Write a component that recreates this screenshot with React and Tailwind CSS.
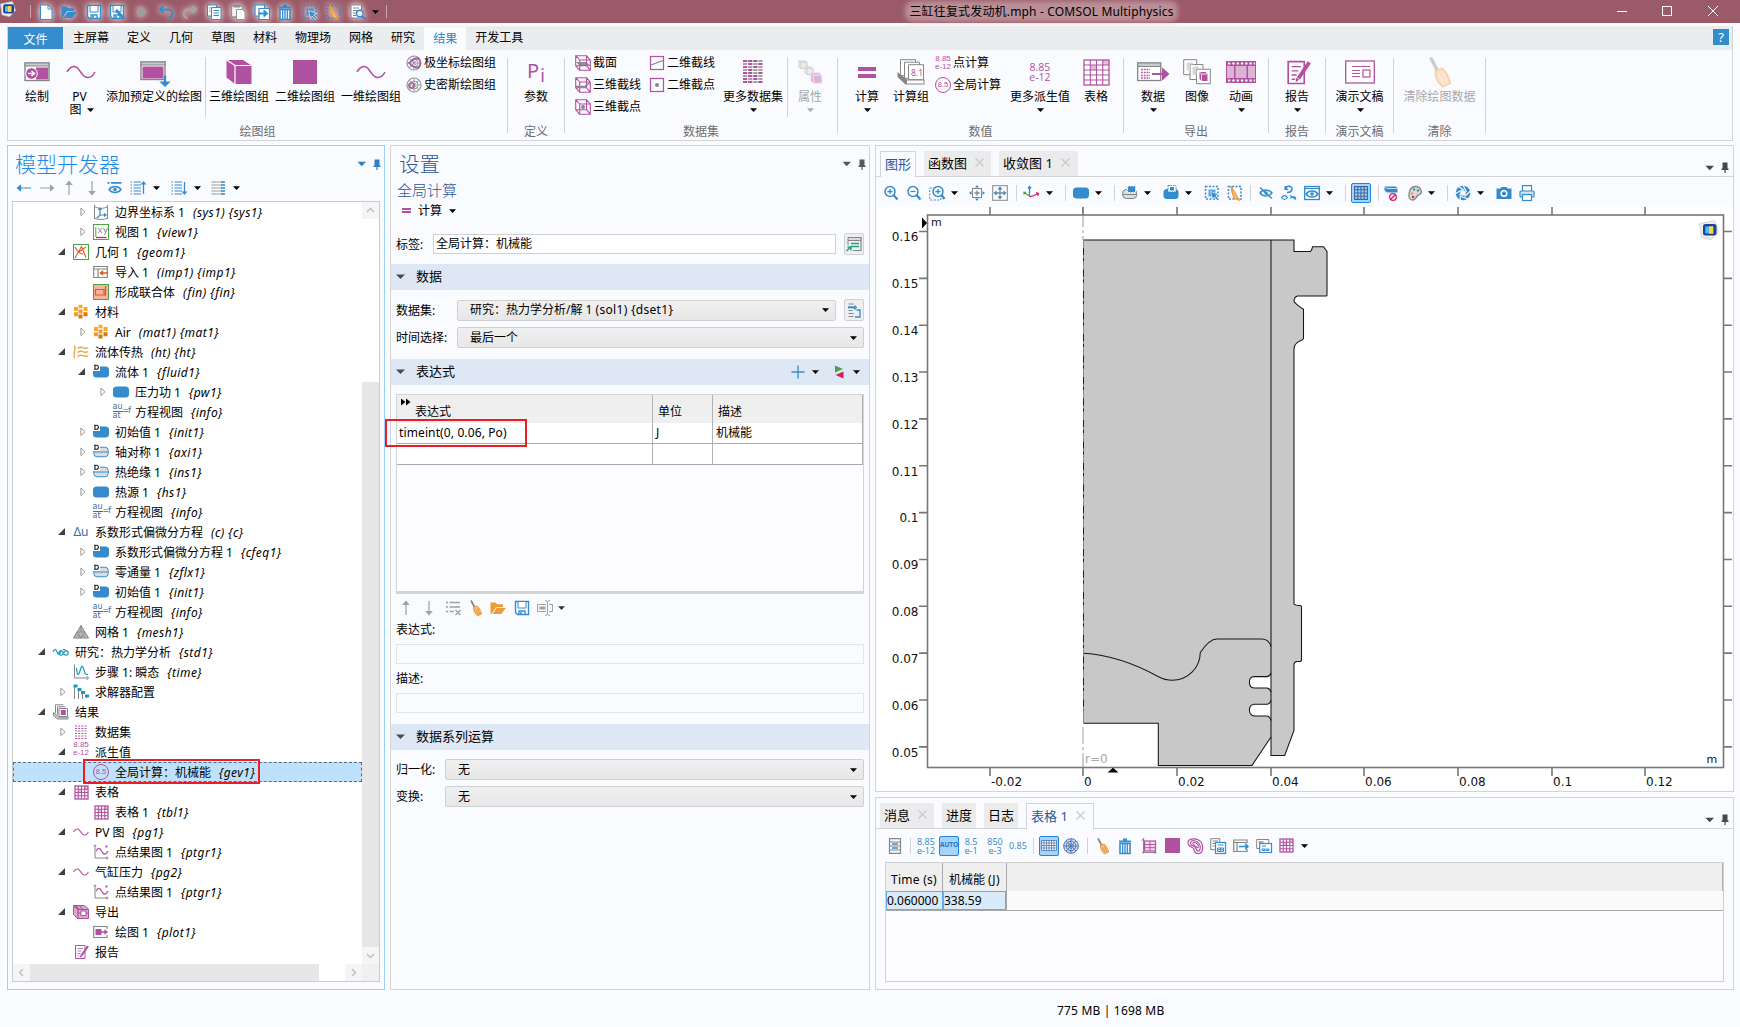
import React from "react";

const P = "#b152a0";
const B = "#348ccc";
const G = "#858688";
const O = "#f0993a";

/* ---------- drawing helpers ---------- */

function Svg({ w = 16, h = 16, vb, className = "", children }) {
  return (
    <svg
      width={w}
      height={h}
      viewBox={vb || `0 0 ${w} ${h}`}
      fill="none"
      className={`block shrink-0 overflow-visible ${className}`}
    >
      {children}
    </svg>
  );
}

function Caret({ className = "", color = "#000" }) {
  return (
    <Svg w={8} h={8} className={className}>
      <path d="M1 2.200h7L4.500 6z" fill={color} />
    </Svg>
  );
}

function Pin({ color }) {
  return (
    <Svg w={8} h={11}>
      <path d="M1.500 0.500h5v6h1v1.400H4.600V11H3.400V7.900H0.500V6.500h1z" fill={color} />
    </Svg>
  );
}

function Wave({ w = 30, h = 14, sw = 1.5 }) {
  return (
    <Svg w={w} h={h} vb="0 0 30 14">
      <path d="M1 7C4 1 9 0 12 3.500C15 7 17 12 21 12.500C25 13 27.500 10 29 7" stroke={P} strokeWidth={sw} />
    </Svg>
  );
}

function Broom({ w = 16, h = 16, faded, className }) {
  return (
    <Svg w={w} h={h} vb="0 0 16 16" className={className}>
      <g opacity={faded ? 0.4 : 1}>
        <path d="M3 0.300L7 8" stroke="#84868a" strokeWidth="1.800" />
        <path d="M5.500 7.500L9 6C12 8.500 13 12 13.500 14L9.500 15.800C7 14 5.500 11 5.500 7.500Z" fill="#f8bd70" stroke={O} />
        <path d="M7.500 9.500l3 5.500M9.500 8.500l2.500 5.500" stroke={faded ? "#fbd9a8" : "#d9822a"} strokeWidth="0.700" />
      </g>
    </Svg>
  );
}

function Trash({ className }) {
  return (
    <Svg className={className}>
      <path d="M6 0.500h4v2h4v2H2v-2h4z" fill={B} />
      <path d="M3 5.500h10v10H3z" fill="#fff" stroke={B} strokeWidth="1.600" />
      <path d="M5.700 6v9M8 6v9M10.300 6v9" stroke={B} strokeWidth="1.300" />
    </Svg>
  );
}

function Floppy({ className, pen }) {
  return (
    <Svg className={className}>
      <path d="M1.500 1.500h13v13H3.500l-2-2z" fill="#fff" stroke={B} strokeWidth="1.400" />
      <path d="M4 1.500h8v6.500H4z" fill="#fff" stroke={B} />
      <path d="M5 14.500v-3.500h6v3.500" stroke={B} strokeWidth="1.300" />
      <path d="M6.200 12h1.600v2H6.200z" fill={B} />
      {pen && <path d="M7 6l8 8.500" stroke={B} strokeWidth="2.600" />}
    </Svg>
  );
}

function Folder({ className, color = B }) {
  return (
    <Svg className={className}>
      <path d="M0.500 2.500h5l1.500 1.700h6v3H6L1.500 13.800H0.500z" fill={color} />
      <path d="M6.500 8h9.300l-4.600 6H2.500z" fill={color} />
    </Svg>
  );
}

function Grid({ w = 16, h = 16, cols = 4, rows = 4, fill = "#fff" }) {
  const v = Array.from({ length: cols - 1 }, (_, i) => 1 + ((w - 2) / cols) * (i + 1));
  const r = Array.from({ length: rows - 1 }, (_, i) => 1 + ((h - 2) / rows) * (i + 1));
  return (
    <Svg w={w} h={h}>
      <rect x="1" y="1" width={w - 2} height={h - 2} fill={fill} />
      <path d={`M${v[cols - 2]} 1H${w - 1}V${r[0]}H${v[cols - 2]}zM${v[0]} ${r[0]}H${v[1]}V${r[1]}H${v[0]}z`} fill="#e3bcdc" />
      <path d={v.map((x) => `M${x} 1V${h - 1}`).join("") + r.map((y) => `M1 ${y}H${w - 1}`).join("")} stroke={P} strokeWidth="1.100" />
      <rect x="1" y="1" width={w - 2} height={h - 2} stroke={P} strokeWidth="1.300" />
    </Svg>
  );
}

function Blob({ d, soft }) {
  return (
    <Svg>
      <rect x={soft ? 0.7 : 0} y={soft ? 3.2 : 2.5} width={soft ? 14.6 : 16} height={soft ? 9.6 : 11} rx="3.500" fill={soft ? "#dcdddf" : B} stroke={soft ? B : "none"} />
      {soft && <path d="M1 8h14" stroke={B} />}
      {d && (
        <g>
          <rect x="0" y="0" width="7" height="7" fill="#fff" />
          <path d="M1 1.200h2.500c2.500 0 2.500 4 0 4H1M2 1v4.500" stroke="#222" strokeWidth="1.100" />
        </g>
      )}
    </Svg>
  );
}

function Cube3({ kind }) {
  return (
    <Svg>
      {kind === "plane" && <path d="M1 7h10l5 4H5z" fill="#909294" />}
      <path d="M0.700 0.700h10.800v10H0.700zM4.700 5h10.600v10.300H4.700zM0.700 0.700L4.700 5M11.500 0.700L15.300 5M0.700 10.700l4 4.600M11.500 10.700l3.800 4.600" stroke={P} strokeWidth="1.100" />
      {kind === "line" && <path d="M1 9.500h9l5-4" stroke={G} strokeWidth="1.400" />}
      {kind === "point" && <circle cx="8" cy="8" r="2" fill={G} />}
    </Svg>
  );
}

function MiniNum({ top, bottom, color, className = "" }) {
  return (
    <div className={`flex flex-col items-center ${color} ${className}`}>
      <span>{top}</span>
      {bottom && <span>{bottom}</span>}
    </div>
  );
}

const MINI_PURPLE = "text-[8px] leading-[8px] text-[#b152a0] [font-family:'Liberation_Sans',sans-serif]";
const MINI_BLUE = "text-[9px] leading-[9px] text-[#2f86c6] [font-family:'Open_Sans',sans-serif]";

function CircleNum() {
  return (
    <div className="flex size-4 shrink-0 items-center justify-center rounded-full border border-[#b152a0] text-[7.500px] leading-none text-[#b152a0] [font-family:'Liberation_Sans',sans-serif]">
      8.5
    </div>
  );
}

function Logo({ className, size = 16 }) {
  return (
    <Svg w={size} h={size} vb="0 0 16 16" className={className}>
      <path d="M0.500 3l12-2.500 3 9-6 6.300-7.500-2z" fill="#eceded" stroke="#c8c9ce" strokeWidth="0.600" />
      <rect x="3.200" y="3.200" width="10.800" height="9.200" rx="2" fill="#17439c" />
      <path d="M5 5.200h4v5.500H5z" fill="#59b9e8" />
      <path d="M8 5h3.500v6H8z" fill="#f3d84b" />
    </Svg>
  );
}

function SelectBox({ className, broom }) {
  return (
    <Svg className={className}>
      <rect x="1.500" y="1.500" width="12.500" height="12.500" stroke={B} strokeWidth="1.500" strokeDasharray="2 1.500" />
      <rect x="4.500" y="4.500" width="7" height="7" fill={B} opacity={broom ? 0 : 0.8} />
      {broom ? (
        <path d="M4 1l4 7 4 7-5-2-2-6z" fill="#f8bd70" stroke={O} strokeWidth="1.300" />
      ) : (
        <path d="M6.500 6.500l8.500 3-3.200 1.200 3 3.500-1.500 1.300-3-3.500-1.600 2.800z" fill={B} stroke="#fff" strokeWidth="0.600" />
      )}
    </Svg>
  );
}

function Eye({ y = 8, color = B }) {
  return (
    <g transform={`translate(0 ${y - 8})`}>
      <path d="M2 8c3-4 9-4 12 0c-3 4-9 4-12 0z" stroke={color} strokeWidth="1.400" />
      <circle cx="8" cy="8" r="1.800" fill={color} />
    </g>
  );
}

function Arrow({ dir, color }) {
  const paths = {
    left: "M1.500 8H15M4.500 5.500L1.500 8l3 2.500z",
    right: "M1 8h13.500M11.500 5.500l3 2.500-3 2.500z",
    up: "M8 1.500V15M5.500 4.500L8 1.500l2.500 3z",
    down: "M8 1v13.500M5.500 11.500L8 14.500l2.500-3z",
  };
  return (
    <Svg>
      <path d={paths[dir]} stroke={color} fill={color} strokeWidth="1.200" />
    </Svg>
  );
}

function Sep({ className = "h-4" }) {
  return <div className={`w-px shrink-0 bg-[#d3d3d5] ${className}`} />;
}

function At({ className = "", children }) {
  return <div className={`flex shrink-0 items-center justify-center ${className}`}>{children}</div>;
}

/* ---------- title bar ---------- */

function TitleBar() {
  const glow = "drop-shadow-[0_0_3px_rgba(255,255,255,1)]";
  return (
    <header className="flex h-[23px] shrink-0 items-center bg-[#9b5a67]">
      <Logo className="-mt-[6px]" />
      <div className="ml-[14px] h-[13px] w-px bg-[#c9a5ac]" />
      <Svg className={`ml-[7px] ${glow}`}>
        <path d="M2.500 1h7.500l4 4v10.500H2.500z" fill="#fff" stroke={B} />
        <path d="M10 1v4h4" stroke={B} />
      </Svg>
      <Folder className={`ml-[7px] ${glow}`} />
      <Floppy className={`ml-[9px] ${glow}`} />
      <Floppy pen className={`ml-[7px] ${glow}`} />
      <Svg className={`ml-[9px] ${glow}`}>
        <path d="M4 2.500l9 5.500-9 5.500z" fill="#9b9d9f" />
      </Svg>
      <Svg className={`ml-2 ${glow}`}>
        <path d="M5.500 2L2 5.500 5.500 9M2.500 5.500h7.500c5.500 0 5.500 8 0.500 8.500" stroke={B} strokeWidth="1.900" />
      </Svg>
      <Svg className={`ml-2 ${glow}`}>
        <path d="M10.500 2L14 5.500 10.500 9M13.500 5.500H6c-5.500 0-5.500 8-0.500 8.500" stroke="#a3a5a8" strokeWidth="1.900" />
      </Svg>
      <Svg className={`ml-2 ${glow}`}>
        <path d="M1.500 1h9v11h-9z" fill="#fff" stroke={B} />
        <path d="M5.500 3.500h9.500V15.500H5.500z" fill="#fff" stroke={B} />
        <path d="M7.500 6.500h5.500M7.500 9h5.500M7.500 11.500h5.500M3 4h1.500M3 7h1.500" stroke={B} strokeWidth="1.200" />
      </Svg>
      <Svg className={`ml-2 ${glow}`}>
        <path d="M1.500 2h11v11h-11z" fill="#f3f3f3" stroke="#8f9193" strokeWidth="1.300" />
        <path d="M4 0.500h6v3H4z" fill="#8f9193" />
        <path d="M6.500 5.500h6l2.500 2.500v7.500H6.500z" fill="#fff" stroke="#8f9193" />
      </Svg>
      <Svg className={`ml-2 ${glow}`}>
        <path d="M1 0.800h9.500V12H1z" fill="#fff" stroke={B} strokeWidth="1.200" />
        <path d="M5 4.500h10.500v11H5z" fill="#fff" stroke={B} strokeWidth="1.200" />
        <path d="M4.500 9.500h8M9.500 6.500l3.500 3-3.500 3" stroke={B} strokeWidth="1.900" />
      </Svg>
      <Trash className={`ml-[7px] ${glow}`} />
      <SelectBox className={`ml-[9px] ${glow}`} />
      <SelectBox broom className={`ml-2 ${glow}`} />
      <Svg className={`ml-2 ${glow}`}>
        <path d="M1 1h10.500v13H1z" fill="#fff" stroke={G} />
        <path d="M3 4h6M3 6.500h4M3 9h3M3 11.500h3" stroke={G} />
        <circle cx="9.800" cy="9.500" r="3.300" fill="#e6f2fb" stroke={B} strokeWidth="1.400" />
        <path d="M12 12l3.500 3.500" stroke={B} strokeWidth="2.200" />
      </Svg>
      <Caret className="ml-[5px]" />
      <div className="ml-[7px] h-[13px] w-px bg-[#c9a5ac]" />
      <div className="ml-[522px] flex w-[265px] justify-center">
        <span className="rounded bg-[#c39ca4]/80 leading-[13px] tracking-[0.170px] whitespace-nowrap text-black shadow-[0_0_5px_4px_rgba(195,156,164,0.8)]">
          三缸往复式发动机.mph - COMSOL Multiphysics
        </span>
      </div>
      <Svg w={10} h={10} className="mt-[-2px] ml-[443px]">
        <path d="M0 5.500h10" stroke="#fff" />
      </Svg>
      <Svg w={10} h={10} className="mt-[-2px] ml-[35px]">
        <rect x="0.500" y="0.500" width="9" height="9" stroke="#fff" />
      </Svg>
      <Svg w={10} h={10} className="mt-[-2px] ml-[36px]">
        <path d="M0 0l10 10M10 0L0 10" stroke="#fff" />
      </Svg>
    </header>
  );
}

/* ---------- ribbon ---------- */

function Big({ icon, label, caret, className = "", muted }) {
  return (
    <div className={`flex shrink-0 flex-col items-center ${className}`}>
      <div className="mt-[6px] flex h-8 items-center justify-center">{icon}</div>
      <div className={`mt-[2px] leading-[14px] whitespace-nowrap ${muted ? "text-[#a9a9ab]" : "text-black"}`}>{label}</div>
      {caret && <Caret className="mt-[2px]" color={muted ? "#a9a9ab" : "#000"} />}
    </div>
  );
}

function Small({ icon, label }) {
  return (
    <div className="flex h-[22px] items-center gap-[2px] whitespace-nowrap">
      <div className="flex w-4 shrink-0 justify-center">{icon}</div>
      <span>{label}</span>
    </div>
  );
}

function Group({ className, label, children }) {
  return (
    <section className={`flex shrink-0 ${className}`}>
      <div className="flex min-w-0 flex-1 flex-col">
        <div className="flex h-[74px]">{children}</div>
        <div className="text-center leading-[16px] text-[#6d6e70]">{label}</div>
      </div>
      <div className="mt-2 h-[75px] w-px shrink-0 bg-[#d3d3d5]" />
    </section>
  );
}

function PolarIcon({ smith }) {
  return (
    <Svg>
      <circle cx="8" cy="8" r="7" stroke="#98999b" strokeWidth="1.200" />
      <circle cx="8" cy="8" r="4" stroke="#98999b" />
      <path d="M1 8h14M8 1v14M3 3l10 10M13 3L3 13" stroke="#98999b" strokeWidth="0.900" />
      {smith ? (
        <circle cx="5.500" cy="8.500" r="2.600" stroke={P} strokeWidth="1.400" />
      ) : (
        <path d="M3 8c2-2 5-5 9-5c3 3 3 7 0 10c-3 0-6-2-9-5z" stroke={P} strokeWidth="1.500" />
      )}
    </Svg>
  );
}

const DATASET_ROWS = ["pppg", "gpgp", "pgpg", "gpgg", "ppgp", "gppg", "pgpg", "ppgp"];

function DatasetIcon() {
  return (
    <Svg w={20} h={24}>
      {DATASET_ROWS.map((row, r) =>
        row.split("").map((c, i) => (
          <rect key={`${r}-${i}`} x={i * 5.1} y={r * 3} width="4.200" height="2" fill={c === "p" ? P : "#a5a2a6"} />
        ))
      )}
    </Svg>
  );
}

const TABS = ["主屏幕", "定义", "几何", "草图", "材料", "物理场", "网格", "研究", "结果", "开发工具"];

function Ribbon() {
  return (
    <div className="mx-[7px] mt-[3px] h-[115px] shrink-0 border-r border-b border-l border-[#d3d4d8]">
      <nav className="flex h-6 items-stretch bg-[#ebecee]">
        <div className="mt-px flex h-[22px] w-[55px] items-center justify-center bg-[#348ccc] pt-[4px] text-white">文件</div>
        <div className="ml-px flex">
          {TABS.map((t) => (
            <div
              key={t}
              className={`flex items-center px-[9px] ${t === "结果" ? "mt-px bg-[#fafbff] text-[#2b86cc]" : "text-black"}`}
            >
              {t}
            </div>
          ))}
        </div>
        <div className="mt-[3px] mr-[3px] ml-auto flex size-4 items-center justify-center bg-[#348ccc] text-[13px] leading-none text-white">
          ?
        </div>
      </nav>
      <div className="flex h-[90px]">
        <Group className="w-[500px]" label="绘图组">
          <Big
            className="w-[58px]"
            label="绘制"
            icon={
              <Svg w={26} h={20}>
                <rect x="1" y="1" width="24" height="17.500" fill="#fff" stroke={G} strokeWidth="1.400" />
                <rect x="1" y="1" width="24" height="3" fill="#c9cacc" stroke={G} />
                <rect x="12" y="5.500" width="12" height="12" fill={P} />
                <circle cx="7.500" cy="11.500" r="5.800" fill={P} stroke="#fff" />
                <path d="M4 11.500h6M7.500 9l3 2.500-3 2.500" stroke="#fff" strokeWidth="1.500" />
              </Svg>
            }
          />
          <div className="flex w-[30px] shrink-0 flex-col items-center">
            <div className="mt-[6px] flex h-8 items-center">
              <Wave />
            </div>
            <div className="mt-[2px] mr-[3px] leading-[14px]">PV</div>
            <div className="ml-px flex items-center gap-1 leading-[12px]">
              图<Caret />
            </div>
          </div>
          <Big
            className="ml-[7px] w-[102px]"
            label="添加预定义的绘图"
            icon={
              <Svg w={30} h={26} className="mt-[4px]">
                <rect x="2" y="1" width="24" height="17.500" fill="#fff" stroke={G} strokeWidth="1.400" />
                <rect x="2" y="1" width="24" height="3" fill="#c9cacc" stroke={G} />
                <rect x="3.500" y="5.500" width="21" height="12" fill={P} />
                <path d="M26 14.500v9M23 21.500h6L26 24.500z" stroke={B} fill={B} strokeWidth="2.200" />
              </Svg>
            }
          />
          <Sep className="mt-[7px] h-[60px]" />
          <Big
            className="w-[66px]"
            label="三维绘图组"
            icon={
              <Svg w={26} h={26}>
                <path d="M0.500 1h16.500l8.500 5.500v18.500H9L0.500 18.500z" fill={P} />
                <path d="M0.500 1L9 6.500h16.500M9 6.500V25" stroke="#fff" strokeWidth="1.200" />
              </Svg>
            }
          />
          <Big className="w-[66px]" label="二维绘图组" icon={<div className="size-6 bg-[#b152a0]" />} />
          <Big className="w-[66px]" label="一维绘图组" icon={<Wave />} />
          <div className="ml-[2px] flex flex-col pt-[2px]">
            <Small icon={<PolarIcon />} label="极坐标绘图组" />
            <Small icon={<PolarIcon smith />} label="史密斯绘图组" />
          </div>
        </Group>
        <Group className="w-[57px]" label="定义">
          <Big
            className="w-full"
            label="参数"
            icon={
              <div className="flex gap-px text-[20px] leading-none text-[#b152a0]">
                P<span className="mt-[5px] text-[18px]">i</span>
              </div>
            }
          />
        </Group>
        <Group className="w-[273px]" label="数据集">
          <div className="ml-[10px] flex w-[74px] flex-col pt-[2px]">
            <Small icon={<Cube3 kind="plane" />} label="截面" />
            <Small icon={<Cube3 kind="line" />} label="三维截线" />
            <Small icon={<Cube3 kind="point" />} label="三维截点" />
          </div>
          <div className="flex w-[74px] flex-col pt-[2px]">
            <Small
              icon={
                <Svg>
                  <rect x="1.500" y="1.500" width="13" height="13" stroke={P} strokeWidth="1.200" />
                  <path d="M2 10l12-4.500" stroke={G} strokeWidth="1.300" />
                </Svg>
              }
              label="二维截线"
            />
            <Small
              icon={
                <Svg>
                  <rect x="1.500" y="1.500" width="13" height="13" stroke={P} strokeWidth="1.200" />
                  <circle cx="8" cy="8" r="2" fill={G} />
                </Svg>
              }
              label="二维截点"
            />
          </div>
          <Big className="w-[60px]" label="更多数据集" caret icon={<DatasetIcon />} />
          <Sep className="mt-[7px] ml-1 h-[60px]" />
          <Big
            className="w-[44px]"
            label="属性"
            caret
            muted
            icon={
              <Svg w={24} h={24}>
                <path d="M1 1h6l2 1.500v6H3L1 7z" fill="#ececee" stroke="#cdced1" />
                <path d="M7 7h6l2 1.500v6H9L7 13z" fill="#ececee" stroke="#cdced1" />
                <path d="M1 1l2 1.500h6M3 2.500v6M7 7l2 1.500h6M9 8.500v6" stroke="#cdced1" strokeWidth="0.800" />
                <path d="M13 13h8l2.500 2v8H15.500L13 21z" fill="#dcb4d6" stroke="#e8cfe5" />
                <path d="M13 13l2.500 2h8M15.500 15v8" stroke="#f3e3f1" />
              </Svg>
            }
          />
        </Group>
        <Group className="w-[286px]" label="数值">
          <Big
            className="ml-1 w-[50px]"
            label="计算"
            caret
            icon={
              <div className="flex flex-col gap-[3px] pt-px">
                <div className="h-1 w-[18px] bg-[#b152a0]" />
                <div className="h-1 w-[18px] bg-[#b152a0]" />
              </div>
            }
          />
          <Big
            className="w-[38px]"
            label="计算组"
            icon={
              <Svg w={28} h={26}>
                <path d="M3.500 0.700h15v16h-15z" fill="#fff" stroke={G} />
                <path d="M7.500 3.200h15v16h-15z" fill="#fff" stroke={G} />
                <path d="M11.500 5.700h15v15h-15z" fill="#fff" stroke={G} />
                <path d="M0.500 13l9.500 7.500h17.500v5H8.500L0.500 18z" fill={G} />
                <path d="M10 21.500h16.500v3H10z" fill="#fff" />
                <text x="14" y="16.500" fontSize="8.500" fill={P}>
                  8.1
                </text>
              </Svg>
            }
          />
          <div className="ml-[5px] flex w-[73px] flex-col pt-[2px]">
            <Small icon={<MiniNum top="8.85" bottom="e-12" color={MINI_PURPLE} />} label="点计算" />
            <Small icon={<CircleNum />} label="全局计算" />
          </div>
          <Big
            className="w-16"
            label="更多派生值"
            caret
            icon={<MiniNum top="8.85" bottom="e-12" color="text-[10.500px] leading-[10px] text-[#b152a0] [font-family:'Open_Sans',sans-serif]" />}
          />
          <Big className="w-12" label="表格" icon={<Grid w={27} h={27} cols={4} rows={5} />} />
        </Group>
        <Group className="w-[145px]" label="导出">
          <Big
            className="ml-[7px] w-11"
            label="数据"
            caret
            icon={
              <Svg w={32} h={22}>
                <rect x="0.700" y="2" width="23" height="17.500" fill="#fff" stroke={G} strokeWidth="1.300" />
                <rect x="0.700" y="2" width="23" height="3.500" fill="#c9cacc" stroke={G} />
                <path d="M4 8.500h9M4 11.500h9M4 14.500h9M4 17h9" stroke={P} strokeWidth="1.500" strokeDasharray="1.800 1" />
                <path d="M15 13h14M26 8.500l5 4.500-5 4.500z" stroke={P} fill={P} strokeWidth="2" />
              </Svg>
            }
          />
          <Big
            className="w-11"
            label="图像"
            icon={
              <Svg w={28} h={26}>
                <path d="M0.700 0.700h13v15h-13z" fill="#fff" stroke={G} />
                <path d="M7 5.500h13v15H7z" fill="#fff" stroke={G} />
                <path d="M13.500 10.200h13.800v14.500H13.500z" fill="#fff" stroke={G} />
                <path d="M3.500 4l5-1 2 2v.500H7v7l-3.500-2zM9.500 8l5-1 2 2v1h-3v7l-4-2z" fill="#d7d8da" />
                <path d="M16.500 13h6l2 2v7h-6l-2-2z" fill={P} />
                <path d="M16.500 13l2 2h6M18.500 15v7" stroke="#fff" strokeWidth="0.800" />
              </Svg>
            }
          />
          <Big
            className="w-11"
            label="动画"
            caret
            icon={
              <Svg w={30} h={22}>
                <rect width="30" height="22" fill={P} />
                <rect x="1" y="5" width="7" height="12" fill="#dcb4d6" />
                <rect x="9.500" y="5" width="11" height="12" fill="#dcb4d6" />
                <rect x="22" y="5" width="7" height="12" fill="#dcb4d6" />
                <path d="M2 2.500h27M2 19.500h27" stroke="#fff" strokeWidth="2" strokeDasharray="2.300 2" />
              </Svg>
            }
          />
        </Group>
        <Group className="w-[57px]" label="报告">
          <Big className="w-full" label="报告" caret icon={<ReportIcon w={27} h={27} />} />
        </Group>
        <Group className="w-[68px]" label="演示文稿">
          <Big
            className="w-full"
            label="演示文稿"
            caret
            icon={
              <Svg w={30} h={24}>
                <rect x="0.700" y="1" width="28.600" height="22" fill="#fff" stroke={P} strokeWidth="1.300" />
                <path d="M7 6.500h18M7 10.500h8M7 13.500h8M7 16.500h8" stroke={P} strokeWidth="1.200" />
                <rect x="18" y="10" width="7" height="7" stroke={P} strokeWidth="1.200" />
              </Svg>
            }
          />
        </Group>
        <Group className="w-[92px]" label="清除">
          <Big className="w-full" muted label="清除绘图数据" icon={<Broom w={30} h={30} faded />} />
        </Group>
      </div>
    </div>
  );
}

function ReportIcon({ w = 16, h = 16 }) {
  return (
    <Svg w={w} h={h} vb="0 0 16 16">
      <path d="M2.500 1.500h9.500v13H2.500z" fill="#fff" stroke={P} />
      <path d="M4.500 4.500h5.500M4.500 7h4M4.500 9.500h3M4.500 12h2" stroke={P} strokeWidth="0.800" />
      <path d="M15 2L8.500 11.500" stroke={P} strokeWidth="2.200" />
      <path d="M7 13.800l0-3 2 1.500z" fill={P} />
    </Svg>
  );
}

/* ---------- model tree ---------- */

const EqIcon = () => (
  <div className="-mt-px flex items-center text-[8px] leading-[8px] text-[#42699c] [font-family:'DejaVu_Sans',sans-serif]">
    <span className="flex w-[10px] flex-col">
      <span className="border-b border-[#42699c]">au</span>
      <span>at</span>
    </span>
    <span className="-mt-[2px] w-[7px] tracking-[-1px]">=f</span>
  </div>
);

const icons = {
  sys: (
    <Svg>
      <path d="M1.500 1v14M14.500 1v14M1.500 2.500C5 5 11 5 14.500 2.500M1.500 14C5 16 11 16 14.500 14" stroke={G} />
      <path d="M7 5v6h5M7 11l-3 3M5.500 6L7 4l1.500 2M11 9.500l2 1.500-2 1.500" stroke={B} strokeWidth="1.200" />
    </Svg>
  ),
  view: (
    <Svg>
      <rect x="0.500" y="0.500" width="15" height="15" fill="#fff" stroke="#4ba341" />
      <path d="M2.800 3v10" stroke="#4ba341" />
      <path d="M3 13.500h10.500" stroke="#d81b60" strokeWidth="1.300" />
      <path d="M5 4l4 5M9 4l-4 5M10.500 4l2 4M14.500 4l-3 7" stroke="#9a9b9d" strokeWidth="1.100" />
    </Svg>
  ),
  geom: (
    <Svg>
      <rect x="0.500" y="0.500" width="15" height="15" fill="#fff" stroke="#4ba341" />
      <path d="M2 14L8.500 2.500l4.500 11M2 3c2 4 4 7 8 7M5 8.500l8-5.500" stroke="#e4572b" strokeWidth="1.100" />
    </Svg>
  ),
  imp: (
    <Svg>
      <path d="M0.700 2.500h13.600v11H0.700zM0.700 5h13.600M5 5v8.500" stroke={G} strokeWidth="1.200" />
      <path d="M7 9h8M9.500 7.500v3L7.500 9z" fill="#e4572b" stroke="#e4572b" strokeWidth="1.400" />
    </Svg>
  ),
  fin: (
    <Svg>
      <rect x="0.500" y="0.500" width="15" height="15" fill="#f6b49c" stroke="#4ba341" />
      <path d="M2.500 5.500h8.500v5.500H2.500zM12.500 2v9H5" stroke="#e4572b" strokeWidth="1.200" />
    </Svg>
  ),
  mat: (
    <Svg>
      <path d="M5.500 0.800h4v3.500h-4zM1 3h4v4H1zM10.500 3h4v4h-4z" fill="#fbab18" />
      <path d="M5.500 5.500h4v4h-4zM1 8.200h4v4H1z" fill={O} />
      <path d="M10.500 8.200h4v4h-4zM5.500 10.500h4v4h-4z" fill="#d27a13" />
    </Svg>
  ),
  ht: (
    <Svg>
      <path d="M1.500 1.500c2 4-2 8 0 13M4.500 4.500c4-4 6 2 10.500-1M4.500 8.500c4-4 6 2 10.500-1M4.500 12.500c4-4 6 2 10.500-1" stroke="#f3a144" strokeWidth="1.400" />
    </Svg>
  ),
  blob: <Blob />,
  dblob: <Blob d />,
  dsoft: <Blob d soft />,
  eq: <EqIcon />,
  pde: <span className="text-[12px] leading-none whitespace-nowrap text-[#42699c]">Δu</span>,
  mesh: (
    <Svg>
      <path d="M8 1.500L15.500 14H0.500z" fill="#b4b5b7" stroke={G} />
      <path d="M4.500 8h7L8 14zM8 1.500v6.500M0.500 14l4-6M8 14l-4-3.500M8 14l4-3.500" stroke={G} strokeWidth="0.700" />
    </Svg>
  ),
  study: (
    <Svg>
      <path d="M0 8c1.500-4 3-3 4 0s3 3 4-1.500" stroke="#1d9aba" strokeWidth="1.200" />
      <circle cx="8" cy="9" r="2.200" stroke="#1d9aba" strokeWidth="1.200" />
      <circle cx="13" cy="9" r="2.200" stroke="#1d9aba" strokeWidth="1.200" />
      <path d="M9.500 5.500h2.500l1.500 1" stroke="#1d9aba" />
    </Svg>
  ),
  step: (
    <Svg>
      <path d="M1.500 0.500v13.500H15.500M13.500 12l2 2-2 2" stroke={G} />
      <path d="M3.500 4c0.500 8 2 8 3.500 3S9.500 0 11 6s2 4 4 4.500" stroke="#1d9aba" strokeWidth="1.200" />
    </Svg>
  ),
  solver: (
    <Svg>
      <path d="M1.500 1v14M5.500 5v10M9.500 8v7M13.500 11v3" stroke={G} />
      <path d="M0.500 0.500h4v3h-4zM4.500 4h4v3h-4zM8 7h4v3H8zM12 10.500h4v3h-4z" fill="#1d9aba" />
    </Svg>
  ),
  results: (
    <Svg>
      <path d="M2.500 9V0.800h8M4.500 11V2.800h8" stroke={G} />
      <path d="M6 4.500h8.500v8H6z" fill="#fff" stroke={G} />
      <rect x="7.800" y="6" width="5" height="5" fill={P} />
      <path d="M0.500 8.500l5 4.500h9.500v2H4.500L0.500 11.500z" fill="#d0d1d3" stroke={G} />
    </Svg>
  ),
  data: (
    <Svg>
      {[2, 4.5, 7, 9.5, 12, 14.5].map((y) => (
        <path key={y} d={`M2 ${y}h11.500`} stroke={P} strokeWidth="1.100" strokeDasharray="2 1.200" />
      ))}
    </Svg>
  ),
  derived: <MiniNum top="8.85" bottom="e-12" color={MINI_PURPLE} className="-mt-[6px]" />,
  gev: <CircleNum />,
  table: <Grid w={15} h={15} />,
  wave: <Wave w={16} h={8} sw={2} />,
  ptgr: (
    <Svg>
      <path d="M2 0.500v13.500H15.500M0.500 2h3M14 12.500v3" stroke={G} />
      <path d="M3 7c2-4 4-3 5.500 0s4 5 6.500 0" stroke={P} strokeWidth="1.300" />
      <rect x="12.500" y="1.500" width="2" height="2" fill={P} />
    </Svg>
  ),
  exp: (
    <Svg>
      <path d="M0.500 1.500h11l4 3.500v9.500h-11l-4-4z" fill="#d9a9d1" stroke={P} />
      <path d="M0.500 1.500L5 5.500h10.500M5 5.500v9M3 1.500l3 4M6.500 1.500l3 4M5 9h10" stroke={P} strokeWidth="1.200" />
      <rect x="8" y="7" width="5" height="4.500" stroke={P} fill="#fff" />
    </Svg>
  ),
  plot: (
    <Svg>
      <path d="M14 5V2.500H0.700v11H14V11" stroke={G} strokeWidth="1.200" />
      <rect x="2.500" y="5" width="6" height="6" fill={P} />
      <path d="M8 8h6M12 6.500L14 8l-2 1.500z" fill={P} stroke={P} strokeWidth="1.300" />
    </Svg>
  ),
  report: <ReportIcon />,
};

/* depth, state (o open, c closed, blank leaf), icon, name, tag, selected */
const TREE = [
  [2, "c", "sys", "边界坐标系 1", "(sys1) {sys1}"],
  [2, "c", "view", "视图 1", "{view1}"],
  [1, "o", "geom", "几何 1", "{geom1}"],
  [2, "", "imp", "导入 1", "(imp1) {imp1}"],
  [2, "", "fin", "形成联合体", "(fin) {fin}"],
  [1, "o", "mat", "材料", ""],
  [2, "c", "mat", "Air", "(mat1) {mat1}"],
  [1, "o", "ht", "流体传热", "(ht) {ht}"],
  [2, "o", "dblob", "流体 1", "{fluid1}"],
  [3, "c", "blob", "压力功 1", "{pw1}"],
  [3, "", "eq", "方程视图", "{info}"],
  [2, "c", "dblob", "初始值 1", "{init1}"],
  [2, "c", "dsoft", "轴对称 1", "{axi1}"],
  [2, "c", "dsoft", "热绝缘 1", "{ins1}"],
  [2, "c", "blob", "热源 1", "{hs1}"],
  [2, "", "eq", "方程视图", "{info}"],
  [1, "o", "pde", "系数形式偏微分方程", "(c) {c}"],
  [2, "c", "dblob", "系数形式偏微分方程 1", "{cfeq1}"],
  [2, "c", "dsoft", "零通量 1", "{zflx1}"],
  [2, "c", "dblob", "初始值 1", "{init1}"],
  [2, "", "eq", "方程视图", "{info}"],
  [1, "", "mesh", "网格 1", "{mesh1}"],
  [0, "o", "study", "研究：热力学分析", "{std1}"],
  [1, "", "step", "步骤 1: 瞬态", "{time}"],
  [1, "c", "solver", "求解器配置", ""],
  [0, "o", "results", "结果", ""],
  [1, "c", "data", "数据集", ""],
  [1, "o", "derived", "派生值", ""],
  [2, "", "gev", "全局计算：机械能", "{gev1}", true],
  [1, "o", "table", "表格", ""],
  [2, "", "table", "表格 1", "{tbl1}"],
  [1, "o", "wave", "PV 图", "{pg1}"],
  [2, "", "ptgr", "点结果图 1", "{ptgr1}"],
  [1, "o", "wave", "气缸压力", "{pg2}"],
  [2, "", "ptgr", "点结果图 1", "{ptgr1}"],
  [1, "o", "exp", "导出", ""],
  [2, "", "plot", "绘图 1", "{plot1}"],
  [1, "", "report", "报告", ""],
];

const INDENT = ["pl-[25px]", "pl-[45px]", "pl-[65px]", "pl-[85px]"];

function TreeRow({ row }) {
  const [depth, state, icon, name, tag, selected] = row;
  return (
    <div
      className={`relative flex h-5 shrink-0 items-center pt-[2px] whitespace-nowrap ${INDENT[depth]} ${
        selected ? "bg-[#bfe1fd] outline-1 -outline-offset-1 outline-dashed outline-[#4f6d85]" : ""
      }`}
    >
      <div className="mr-[5px] flex w-[10px] shrink-0 justify-center">
        {state === "o" && (
          <Svg w={7} h={7} className="-mt-[3px] -ml-[3px]">
            <path d="M7 0v7H0z" fill="#3f4042" />
          </Svg>
        )}
        {state === "c" && (
          <Svg w={6} h={10} className="-mt-[2px]">
            <path d="M0.900 1v7.600L5 4.800z" fill="#fff" stroke="#97989a" />
          </Svg>
        )}
      </div>
      <div className="-mt-[2px] flex h-4 w-4 shrink-0 items-center justify-center">{icons[icon]}</div>
      <span className="ml-[6px]">{name}</span>
      {tag && <span className="ml-2 tracking-[0.450px] italic">{tag}</span>}
      {selected && <div className="absolute -top-[3px] left-[70px] h-[25px] w-[177px] border-2 border-[#ec1c24]" />}
    </div>
  );
}

function ListIcon({ kind }) {
  return (
    <Svg>
      <path
        d="M0.500 2h1.500M0.500 5h1.500M0.500 8h1.500M0.500 11h1.500M0.500 14h1.500M3.500 2h7.500M3.500 5h7.500M3.500 8h7.500M3.500 11h7.500M3.500 14h7.500"
        stroke={kind === "cols" ? "#9fa1a3" : B}
        strokeWidth="1.200"
      />
      {kind === "cols" && <path d="M1.500 2h2.500M1.500 5h2.500M1.500 8h2.500M1.500 11h2.500M1.500 14h2.500" stroke="#9fa1a3" strokeWidth="1.200" />}
      {kind === "up" && <path d="M13.500 14V2M11.500 4.500l2-2.500 2 2.500" stroke={B} strokeWidth="1.300" />}
      {kind === "down" && <path d="M13.500 2v12M11.500 11.500l2 2.500 2-2.500" stroke={B} strokeWidth="1.300" />}
      {kind === "cols" && <path d="M10 2h4M10 5h4M10 8h4M10 11h4M10 14h4" stroke={B} strokeWidth="1.500" />}
    </Svg>
  );
}

function PanelTools({ color, className = "" }) {
  return (
    <div className={`ml-auto flex items-center gap-[7px] ${className}`}>
      <Svg w={9} h={8}>
        <path d="M0.500 1.800h8.500L4.700 6.300z" fill={color} />
      </Svg>
      <Pin color={color} />
    </div>
  );
}

function Chevron({ d }) {
  return (
    <Svg w={9} h={9}>
      <path d={d} stroke="#bfc0c2" strokeWidth="1.500" />
    </Svg>
  );
}

function ModelBuilder() {
  return (
    <aside className="flex w-[378px] shrink-0 flex-col border border-[#99d1f8]">
      <div className="flex h-[31px] items-center pt-[4px] pr-[3px] pl-[7px]">
        <h2 className="text-[21px] leading-[26px] font-light text-[#1d8ce6]">模型开发器</h2>
        <PanelTools color="#2f7fc4" className="mt-px" />
      </div>
      <div className="-mt-px mb-px flex h-6 items-center">
        <At className="ml-2"><Arrow dir="left" color={B} /></At>
        <At className="ml-[7px]"><Arrow dir="right" color="#9fa1a3" /></At>
        <At className="ml-[6px]"><Arrow dir="up" color="#9fa1a3" /></At>
        <At className="ml-[7px]"><Arrow dir="down" color="#9fa1a3" /></At>
        <Svg className="ml-[7px]">
          <path d="M0.500 2.800h2M4 2.800h10.500" stroke={B} strokeWidth="1.800" />
          <Eye y={9.5} />
        </Svg>
        <At className="ml-[7px]"><ListIcon kind="up" /></At>
        <Caret className="ml-[6px]" />
        <At className="ml-[11px]"><ListIcon kind="down" /></At>
        <Caret className="ml-[6px]" />
        <At className="ml-[10px]"><ListIcon kind="cols" /></At>
        <Caret className="ml-[5px]" />
      </div>
      <div className="mx-1 flex h-[781px] flex-col border border-[#cbccce] bg-white">
        <div className="flex h-[762px] shrink-0">
          <div className="flex min-w-0 flex-1 flex-col">
            {TREE.map((row, i) => (
              <TreeRow key={i} row={row} />
            ))}
          </div>
          <div className="flex w-[17px] shrink-0 flex-col">
            <div className="flex h-[17px] items-center justify-center bg-[#f5f5f5]">
              <Chevron d="M1 6l3.500-3.500L8 6" />
            </div>
            <div className="h-[163px] bg-white" />
            <div className="flex-1 bg-[#e7e7e7]" />
            <div className="flex h-[17px] items-center justify-center bg-[#f5f5f5]">
              <Chevron d="M1 3l3.500 3.500L8 3" />
            </div>
          </div>
        </div>
        <div className="flex h-[17px] shrink-0">
          <div className="flex w-[17px] items-center justify-center bg-[#f5f5f5]">
            <Chevron d="M6 1L2.500 4.500 6 8" />
          </div>
          <div className="flex-1 bg-[#e7e7e7]" />
          <div className="w-[26px] bg-white" />
          <div className="flex w-[17px] items-center justify-center bg-[#f5f5f5]">
            <Chevron d="M3 1l3.500 3.500L3 8" />
          </div>
          <div className="w-[17px] bg-[#f0f0f0]" />
        </div>
      </div>
    </aside>
  );
}

/* ---------- settings ---------- */

function Section({ title, children, className = "" }) {
  return (
    <div className={`flex h-[26px] shrink-0 items-center bg-[#dee8f4] text-[13px] ${className}`}>
      <Svg w={9} h={7} className="-mt-px ml-[5px]">
        <path d="M0 1.500h9L4.500 6z" fill="#4a4b4d" />
      </Svg>
      <span className="-mt-[2px] ml-[11px] leading-[18px]">{title}</span>
      {children}
    </div>
  );
}

function Select({ value, className }) {
  return (
    <div className={`flex h-[21px] items-center justify-between rounded-[2px] border border-[#cfd0d2] bg-gradient-to-b from-[#f0f0f1] to-[#e7e7e8] pr-[6px] pl-3 ${className}`}>
      {value}
      <Caret />
    </div>
  );
}

function SideButton({ children }) {
  return (
    <div className="ml-2 flex h-[22px] w-5 shrink-0 items-center justify-center rounded-[2px] border border-[#d0d1d3] bg-[#efeff0]">
      {children}
    </div>
  );
}

function Settings() {
  return (
    <section className="ml-[5px] flex w-[480px] shrink-0 flex-col border border-[#d3d4d8]">
      <div className="flex h-[31px] shrink-0 items-center pt-[4px] pr-[3px] pl-2">
        <h2 className="text-[20.500px] leading-[26px] font-light text-[#2a5699]">设置</h2>
        <PanelTools color="#55575a" className="mt-px" />
      </div>
      <div className="mt-[4px] h-[18px] shrink-0 pl-[6px] text-[15px] leading-[18px] font-light text-[#2a5699]">全局计算</div>
      <div className="mt-[2px] flex h-5 shrink-0 items-center pl-[11px]">
        <div className="-mt-px flex w-[9px] flex-col gap-px">
          <div className="h-[2px] bg-[#b152a0]" />
          <div className="h-[2px] bg-[#b152a0]" />
        </div>
        <span className="mr-[6px] ml-[7px]">计算</span>
        <Caret className="-mt-px" />
      </div>
      <div className="mt-[12px] flex h-[22px] shrink-0 items-center pl-[5px]">
        <span className="w-[37px] pt-px">标签:</span>
        <div className="flex h-5 w-[403px] items-center border border-[#cfd0d2] bg-white pl-[2px]">全局计算：机械能</div>
        <SideButton>
          <Svg>
            <path d="M2 1.500h13v13H7" fill="none" stroke={G} strokeWidth="1.200" />
            <path d="M2 1.500h13v3H2zM2 4.500V9" stroke={G} fill="#d8d9db" />
            <path d="M5 7.500h8M5 10.500h8" stroke="#25a18a" strokeWidth="1.300" />
            <path d="M0.500 15l4-4M1.500 11h3.500v3.500" stroke="#25a18a" strokeWidth="1.500" />
          </Svg>
        </SideButton>
      </div>
      <Section className="mt-[9px]" title="数据" />
      <div className="mt-[9px] flex h-[22px] shrink-0 items-center pl-[5px]">
        <span className="w-[61px] pt-px">数据集:</span>
        <Select
          className="w-[379px]"
          value={
            <span>
              研究：热力学分析/解 1 <span className="tracking-[0.300px]">(sol1) {"{dset1}"}</span>
            </span>
          }
        />
        <SideButton>
          <Svg>
            <path d="M2.500 2h5M2.500 8.500h4M2.500 11.500h5M2.500 14.500h5" stroke={G} strokeWidth="1.200" />
            <path d="M2 5.300h5" stroke={B} strokeWidth="2" />
            <path d="M8 5.500h3M9.500 3.500l-2 2 2 2M10.500 8h3.500v7h-5" stroke={B} strokeWidth="1.300" />
          </Svg>
        </SideButton>
      </div>
      <div className="mt-[6px] flex h-[21px] shrink-0 items-center pl-[5px]">
        <span className="w-[61px]">时间选择:</span>
        <Select className="w-[407px]" value="最后一个" />
      </div>
      <Section className="mt-[11px]" title="表达式">
        <div className="mr-[9px] ml-auto flex items-center">
          <Svg w={14} h={14}>
            <path d="M7 0.500v13M0.500 7h13" stroke={B} strokeWidth="1.300" />
          </Svg>
          <Caret className="ml-[6px]" />
          <Svg w={10} h={14} className="ml-[15px]">
            <path d="M1 0.500v7l8-3.500z" fill="#4ba341" />
            <path d="M9.500 6.500v7l-8-3.500z" fill="#d81b60" />
          </Svg>
          <Caret className="ml-[8px]" />
        </div>
      </Section>
      <div className="relative mx-[5px] mt-[9px] flex h-[200px] shrink-0 flex-col border border-b-[3px] border-[#d3d4d6] bg-[#fdfdff]">
        <div className="grid h-[28px] grid-cols-[256px_60px_150px] bg-[#efeff0]">
          <div className="flex border-r border-[#b1b2b4]">
            <Svg w={10} h={8} className="mt-[3px] ml-[4px]">
              <path d="M0 0.500l4.500 3.500L0 7.500zM5 0.500l4.500 3.500L5 7.500z" fill="#000" />
            </Svg>
            <span className="mt-[8px] ml-[4px] leading-[18px]">表达式</span>
          </div>
          <div className="border-r border-[#b1b2b4] pt-2 pl-[5px] leading-[18px]">单位</div>
          <div className="border-r border-[#b1b2b4] pt-2 pl-[5px] leading-[18px]">描述</div>
        </div>
        <div className="grid h-[21px] grid-cols-[256px_60px_150px] border-b border-[#a8a9ab] bg-white">
          <div className="border-r border-[#b1b2b4] pl-[2px] leading-[20px] tracking-[0.120px]">timeint(0, 0.06, Po)</div>
          <div className="border-r border-[#b1b2b4] pl-[3px] leading-[20px]">J</div>
          <div className="border-r border-[#b1b2b4] pl-[3px] leading-[20px]">机械能</div>
        </div>
        <div className="grid h-[21px] grid-cols-[256px_60px_150px] border-b border-[#a8a9ab] bg-white">
          <div className="border-r border-[#b1b2b4]" />
          <div className="border-r border-[#b1b2b4]" />
          <div className="border-r border-[#b1b2b4]" />
        </div>
        <div className="absolute top-[24px] -left-[12px] h-[28px] w-[142px] border-2 border-[#ec1c24]" />
      </div>
      <div className="mt-[4px] flex h-5 shrink-0 items-center">
        <At className="ml-[7px]"><Arrow dir="up" color="#9fa1a3" /></At>
        <At className="ml-[7px]"><Arrow dir="down" color="#9fa1a3" /></At>
        <Svg className="ml-2">
          <path d="M1 2.500h2M1 7h2M1 11.500h2M4.500 2.500H15M4.500 7H15M4.500 11.500H9M10.500 10l5 5M15.500 10l-5 5" stroke="#9fa1a3" strokeWidth="1.400" />
        </Svg>
        <Broom className="ml-[7px]" />
        <Folder className="ml-[6px]" color={O} />
        <Floppy className="ml-2" />
        <Svg className="ml-[7px]">
          <path d="M9 4.500H0.500v7H9M12 4.500h3.500v7H12" stroke="#9fa1a3" />
          <rect x="2.500" y="6.500" width="6" height="3" fill="#9fa1a3" />
          <path d="M8 0.500c2 0 2.500 1 2.500 2v11c0 1-.5 2-2.500 2M13 0.500c-2 0-2.500 1-2.500 2M13 15.500c-2 0-2.500-1-2.500-2" stroke="#9fa1a3" />
        </Svg>
        <Caret className="ml-1" color="#333" />
      </div>
      <div className="mt-[3px] h-[18px] shrink-0 pl-[5px] leading-[18px]">表达式:</div>
      <div className="mx-[5px] mt-[5px] h-5 shrink-0 border border-[#e4e5e8]" />
      <div className="mt-[6px] h-[18px] shrink-0 pl-[5px] leading-[18px]">描述:</div>
      <div className="mx-[5px] mt-[5px] h-5 shrink-0 border border-[#e4e5e8]" />
      <Section className="mt-[11px]" title="数据系列运算" />
      <div className="mt-[9px] flex h-[21px] shrink-0 items-center pl-[5px]">
        <span className="w-[49px]">归一化:</span>
        <Select className="w-[419px]" value="无" />
      </div>
      <div className="mt-[6px] flex h-[21px] shrink-0 items-center pl-[5px]">
        <span className="w-[49px]">变换:</span>
        <Select className="w-[419px]" value="无" />
      </div>
    </section>
  );
}

/* ---------- graphics ---------- */

function Close({ className = "" }) {
  return (
    <Svg w={9} h={9} className={className}>
      <path d="M0.500 0.500l8 8M8.500 0.500l-8 8" stroke="#c5cbd9" strokeWidth="1.300" />
    </Svg>
  );
}

function Tab({ label, active, close, className = "" }) {
  return (
    <div
      className={`flex items-center text-[13px] whitespace-nowrap ${
        active ? "-mb-px h-[26px] border border-b-0 border-[#d3d4d8] bg-[#fafbff] text-[#2a5699]" : "mb-0 h-[25px] bg-[#ebebec]"
      } ${className}`}
    >
      <span className="-mt-[2px]">{label}</span>
      {close && <Close className="-mt-[2px] ml-[8px]" />}
    </div>
  );
}

function Lens({ sign, box }) {
  return (
    <Svg>
      {box && <rect x="0.800" y="3" width="11" height="12" stroke={B} strokeDasharray="2 1.500" />}
      <circle cx={box ? 9 : 7} cy="6.500" r="5" fill="#fff" stroke={B} strokeWidth="1.500" />
      <path d={box ? "M12.500 10l3 4" : "M10.500 10l4 4.500"} stroke={B} strokeWidth="2.200" />
      <path d={sign === "-" ? "M4.500 6.500h5" : box ? "M6.500 6.500h5M9 4v5" : "M4.500 6.500h5M7 4v5"} stroke={B} strokeWidth="1.300" />
    </Svg>
  );
}

function GraphToolbar() {
  return (
    <div className="flex h-[30px] shrink-0 items-center pt-[2px]">
      <At className="ml-[7px]"><Lens sign="+" /></At>
      <At className="ml-[7px]"><Lens sign="-" /></At>
      <At className="ml-[7px]"><Lens box /></At>
      <Caret className="ml-[5px]" />
      <Svg className="ml-[11px]">
        <rect x="3.500" y="3.500" width="9" height="9" stroke={G} />
        <path d="M8 5.500v5M5.500 8h5" stroke={G} strokeWidth="1.300" />
        <path d="M8 0l2 2.500H6zM8 16l2-2.500H6zM0 8l2.500-2v4zM16 8l-2.500-2v4z" fill={B} />
      </Svg>
      <Svg className="ml-[7px]">
        <rect x="0.700" y="0.700" width="14.600" height="14.600" stroke={G} />
        <path d="M8 4v8M4 8h8" stroke={G} strokeWidth="1.300" />
        <path d="M8 1.500l2.500 3h-5zM8 14.500l2.500-3h-5zM1.500 8l3-2.500v5zM14.500 8l-3-2.500v5z" fill={B} />
      </Svg>
      <Sep className="ml-2 h-4" />
      <Svg className="ml-[6px]">
        <path d="M6.500 11V1.500M5 3.500l1.500-2 1.500 2" stroke={B} strokeWidth="1.300" />
        <path d="M6.500 11L1 7.500M1 9.500v-2h2" stroke="#4ba341" strokeWidth="1.300" />
        <path d="M6.500 11.500c3 0 5-1 8.500-3M13 7.500l2.500.8-1 2.500" stroke="#d81b60" strokeWidth="1.300" />
      </Svg>
      <Caret className="ml-[6px]" />
      <Sep className="ml-3 h-4" />
      <At className="ml-[7px]"><Blob /></At>
      <Caret className="ml-[5px]" />
      <Sep className="ml-3 h-4" />
      <Svg className="ml-[7px]">
        <rect x="0.700" y="4.500" width="14" height="9" rx="3.500" fill="#dcdddf" stroke={G} />
        <rect x="5.500" y="1" width="8" height="6.500" fill={B} stroke="#fff" strokeDasharray="1.500 1" />
        <path d="M1 9.500h13.500" stroke={G} />
      </Svg>
      <Caret className="ml-[5px]" />
      <Svg className="ml-3">
        <rect x="0.500" y="4" width="15" height="10" rx="3.500" fill={B} />
        <rect x="5" y="0.500" width="8" height="6.500" fill="#fff" stroke={B} strokeDasharray="1.500 1" />
        <rect x="7" y="2" width="4" height="3.500" fill={B} />
      </Svg>
      <Caret className="ml-[5px]" />
      <SelectBox className="ml-3" />
      <SelectBox broom className="ml-[7px]" />
      <Sep className="ml-[7px] h-4" />
      <Svg className="ml-[7px]">
        <Eye />
        <path d="M2 2.500l12 11" stroke={B} strokeWidth="1.400" />
      </Svg>
      <Svg className="ml-[7px]">
        <path d="M4.500 0.800L4 4l3.200 0.500M4.300 4C6-.2 12 1 11 4.500s-4 3-5 3" stroke={B} strokeWidth="1.500" />
        <path d="M0.500 12.500c1.500-2.500 4.500-2.500 6 0c-1.500 2.500-4.500 2.500-6 0zM9 10.500l6 4M9.500 13.500c1-2.500 4-2.500 5.500 0" stroke={B} strokeWidth="1.200" />
      </Svg>
      <Svg className="ml-[7px]">
        <rect x="0.700" y="1.500" width="14.600" height="13" fill="#fff" stroke={B} strokeWidth="1.300" />
        <path d="M0.700 3.500h14.600" stroke={B} strokeWidth="1.300" />
        <Eye y={9} />
      </Svg>
      <Caret className="ml-[5px]" />
      <Sep className="ml-3 h-4" />
      <div className="ml-[5px] flex h-[20px] w-[20px] items-center justify-center rounded-[2px] border border-[#1b87e0] bg-[#a6d3fa]">
        <Svg w={14} h={14}>
          <path d="M0.600 0.600h12.800v12.800H0.600zM3.800 1v12M7 1v12M10.200 1v12M1 3.800h12M1 7h12M1 10.200h12" stroke="#36689f" strokeWidth="1.100" />
        </Svg>
      </div>
      <Sep className="ml-[7px] h-4" />
      <Svg className="ml-1">
        <path d="M1.500 1.500h11l2 1.500v4.500H4L1.500 5.500z" fill={B} />
        <path d="M1.500 1.500L4 3.500h10.500" stroke="#fff" strokeWidth="0.700" />
        <circle cx="10" cy="12" r="3.300" fill="#fff" stroke="#d81b60" strokeWidth="1.300" />
        <path d="M7.800 14.200l4.400-4.400" stroke="#d81b60" strokeWidth="1.300" />
      </Svg>
      <Svg className="ml-2">
        <path d="M3 5c2-5 9-4.500 11 0c1.500 3-1 4.500-2.500 5c-2 0-2 5-6 5C1 15 1.500 9 3 5z" fill="#d9dadc" stroke={G} strokeWidth="1.400" />
        <circle cx="7" cy="4.500" r="1.200" fill={B} />
        <circle cx="11" cy="5.500" r="1.200" fill="#4ba341" />
        <circle cx="5" cy="8.500" r="1.200" fill={O} />
        <circle cx="6" cy="12" r="1.200" fill="#d81b60" />
      </Svg>
      <Caret className="ml-1" />
      <Sep className="ml-3 h-4" />
      <Svg className="ml-[7px]">
        <circle cx="8" cy="8" r="5" stroke={B} strokeWidth="4.500" />
        <path d="M8 0l3.500 7M15.500 6l-6 5.500M13 14l-7-2.500M5.500 16L5 8.500M0.500 8.500L7 5M3.500 1.500l5.500 3.500" stroke="#fafbff" strokeWidth="1.100" />
      </Svg>
      <Caret className="ml-[5px]" />
      <Svg className="ml-3">
        <path d="M0.500 3.500h4l1-1.500h5l1 1.500h4v10.500H0.500z" fill={B} />
        <circle cx="8" cy="8.500" r="2.800" fill={B} stroke="#fff" strokeWidth="1.500" />
      </Svg>
      <Svg className="ml-[7px]">
        <path d="M3.500 6V0.700h9V6" fill="#fff" stroke={B} strokeWidth="1.200" />
        <rect x="1" y="6" width="14" height="6" rx="1" fill="#cfe4f5" stroke={B} strokeWidth="1.200" />
        <rect x="3.500" y="9.500" width="9" height="6" fill="#fff" stroke={B} strokeWidth="1.200" />
      </Svg>
    </div>
  );
}

const X_TICKS = [
  [990, "-0.02"],
  [1083, "0"],
  [1177, "0.02"],
  [1271, "0.04"],
  [1364, "0.06"],
  [1458, "0.08"],
  [1552, "0.1"],
  [1645, "0.12"],
];
const Y_TICKS = ["0.16", "0.15", "0.14", "0.13", "0.12", "0.11", "0.1", "0.09", "0.08", "0.07", "0.06", "0.05"];

function Plot() {
  return (
    <div className="relative h-[584px] w-[857px] bg-white">
      <svg width="857" height="584" viewBox="876 207 857 584" fill="none" className="block" fontFamily="'DejaVu Sans', sans-serif" fontSize="12">
        <path d="M1083 207v33" stroke="#bdbdbd" strokeDasharray="20 3 3 3" strokeWidth="1.500" />
        <path d="M1083.500 240H1294V251.500H1310.500Q1312 250 1312.500 246.800H1323.500L1327 251.500V295Q1327 296 1326 296H1297.500Q1294 297 1294 301.500Q1296 304.500 1303.500 309.300V338.500L1302 340Q1294 343 1294 349V604Q1295 605.500 1301 605.700L1301.500 607V660.500L1300.500 661.400H1296.500Q1294 662 1294 664.500V730.500L1284.700 755.400H1271V737L1252 765.400H1158.300V723.300H1083.500Z" fill="#c8c8c8" />
        <path d="M1271 675Q1269.500 676.600 1267 676.600H1254Q1249.400 677 1249.400 682.200T1254 688H1267Q1270 688.500 1271 690.500Z" fill="#fff" />
        <path d="M1271 702.500Q1269.500 704.300 1267 704.300H1254Q1249.400 705 1249.400 710T1254 716H1267Q1270 716.500 1271 719Z" fill="#fff" />
        <g stroke="#151515" strokeWidth="1.050">
          <path d="M1083.500 240H1294V251.500H1310.500Q1312 250 1312.500 246.800H1323.500L1327 251.500V295Q1327 296 1326 296H1297.500Q1294 297 1294 301.500Q1296 304.500 1303.500 309.300V338.500L1302 340Q1294 343 1294 349V604Q1295 605.500 1301 605.700L1301.500 607V660.500L1300.500 661.400H1296.500Q1294 662 1294 664.500V730.500L1284.700 755.400H1271V240" />
          <path d="M1271 737L1252 765.400H1158.300V723.300H1083.500" />
          <path d="M1083.500 653.300C1111 655 1137 665 1158 676.500C1163 679 1167 680.300 1172 680.300C1188 680.300 1200 668 1200.300 652.500C1204 647 1210 639 1217 639H1262.500Q1269 639.500 1271 646.500" />
          <path d="M1271 673Q1269.500 676.600 1267 676.600H1254Q1249.400 677 1249.400 682.200T1254 688H1267Q1270 688.500 1271 692" />
          <path d="M1271 700.500Q1269.500 704.300 1267 704.300H1254Q1249.400 705 1249.400 710T1254 716H1267Q1270 716.500 1271 720.500" />
        </g>
        <path d="M1083.500 240V723.300" stroke="#8a8a8a" />
        <path d="M1083.500 248V710" stroke="#222" strokeDasharray="7 3 3 8.500" />
        <path d="M1083 727v40" stroke="#c4c4c4" strokeDasharray="17 3 3 3" strokeWidth="1.600" />
        <rect x="927.500" y="215" width="796" height="552.500" stroke="#777" strokeWidth="1.600" />
        {X_TICKS.map(([x, t]) => (
          <g key={t}>
            <path d={`M${x} 207v8M${x} 768v8`} stroke="#777" strokeWidth="1.600" />
            <text x={x + 1} y="785.700" fill="#111">
              {t}
            </text>
          </g>
        ))}
        {Y_TICKS.map((t, i) => (
          <g key={t}>
            <path d={`M919 ${231.5 + i * 46.85}h8M1724 ${231.5 + i * 46.85}h8`} stroke="#777" strokeWidth="1.600" />
            <text x="918.500" y={241.3 + i * 46.85} fill="#111" textAnchor="end">
              {t}
            </text>
          </g>
        ))}
        <path d="M922 217.500l5 5.500-5 5.500zM1107.500 772.500l5.500-4.800 5.500 4.800z" fill="#000" />
        <text x="931" y="226" fill="#111" fontSize="11">m</text>
        <text x="1706.500" y="762.800" fill="#111" fontSize="11">m</text>
        <text x="1085" y="763" fill="#a9a9a9">r=0</text>
      </svg>
      <div className="absolute top-[13px] right-[14px]">
        <Logo size={20} />
      </div>
    </div>
  );
}

function Graphics() {
  return (
    <section className="flex h-[647px] shrink-0 flex-col border border-[#d3d4d8]">
      <div className="flex h-[31px] shrink-0 items-end border-b border-[#d3d4d8] pl-1">
        <Tab label="图形" active className="w-[36px] justify-center" />
        <Tab label="函数图" close className="ml-2 w-[67px] pl-[4px]" />
        <Tab label="收敛图 1" close className="ml-2 w-[79px] pl-[4px]" />
        <PanelTools color="#45474a" className="mr-1 mb-[3px]" />
      </div>
      <GraphToolbar />
      <Plot />
    </section>
  );
}

/* ---------- table window ---------- */

function TableToolbar() {
  return (
    <div className="flex h-[33px] shrink-0 items-center">
      <Svg className="ml-[11px]">
        <path d="M2.500 0.700h11v14.600h-11zM2.500 4h11M2.500 12h11" stroke={G} strokeWidth="1.200" />
        <path d="M2.500 8h11" stroke={G} />
        <path d="M5 6h6M5 10h6" stroke={B} strokeWidth="1.300" />
      </Svg>
      <Sep className="ml-[7px] h-4" />
      <MiniNum className="ml-[5px] w-5" top="8.85" bottom="e-12" color={MINI_BLUE} />
      <div className="ml-[3px] flex size-5 items-center justify-center rounded-[2px] border border-[#1b87e0] bg-[#a6d3fa] text-[6.500px] leading-none font-bold text-[#1f76bd]">
        AUTO
      </div>
      <MiniNum className="ml-1 w-4" top="8.5" bottom="e-1" color={MINI_BLUE} />
      <MiniNum className="ml-[6px] w-5" top="850" bottom="e-3" color={MINI_BLUE} />
      <MiniNum className="ml-[3px] w-5" top="0.85" color={MINI_BLUE} />
      <Sep className="ml-[5px] h-4" />
      <div className="ml-[5px] flex size-5 items-center justify-center rounded-[2px] border border-[#1b87e0] bg-[#a6d3fa]">
        <Svg w={16} h={12}>
          <path d="M0.500 0.500h15v10h-15z" fill="#fff" />
          <path d="M0.500 0.500h15v10h-15zM0.500 3h15M0.500 5.500h15M0.500 8h15M3 0.500v10M5.500 0.500v10M8 0.500v10M10.500 0.500v10M13 0.500v10" stroke="#4b74ad" strokeWidth="0.800" />
        </Svg>
      </div>
      <Svg className="ml-1">
        <circle cx="8" cy="8" r="7.300" fill="#cddcf0" stroke="#4b74ad" />
        <circle cx="8" cy="8" r="4.800" stroke="#4b74ad" />
        <circle cx="8" cy="8" r="2.300" stroke="#4b74ad" />
        <path d="M1 8h14M8 1v14M3 3l10 10M13 3L3 13" stroke="#4b74ad" strokeWidth="0.800" />
      </Svg>
      <Sep className="ml-2 h-4" />
      <Broom className="ml-[7px]" />
      <Trash className="ml-[6px]" />
      <Svg className="ml-2">
        <path d="M2.500 0v15.500M0.500 2h3M1 14.500h14.500M14 13v3" stroke={G} />
        <rect x="3.500" y="3" width="11" height="10" fill="#f1dcee" stroke={P} strokeWidth="1.200" />
        <path d="M3.500 6.500h11M3.500 9.700h11M9 3v10" stroke={P} />
      </Svg>
      <div className="ml-2 size-[15px] bg-[#b152a0]" />
      <Svg className="ml-[7px]">
        <path d="M1 4C2-.5 11 0 14 4s2 11-2 11.500S7 13 7 11 0 9 1 4z" stroke={P} strokeWidth="1.200" />
        <path d="M3.500 4.500C5 1.500 10 2.500 12 5.500s1.500 7-.5 7.500S9 10.500 8.500 9.500 2.500 7 3.500 4.500z" stroke={P} strokeWidth="1.200" />
        <path d="M6 5c1.500-1.500 4 0 5 2s0 3.500-1 2.500S5 6.500 6 5z" stroke={P} strokeWidth="1.100" />
      </Svg>
      <Svg className="ml-[7px]">
        <path d="M0.700 0.700h9v11h-9z" fill="#fff" stroke={G} />
        <path d="M2.500 3h5.500M2.500 5.500h3M2.500 8h2" stroke={G} />
        <rect x="5.500" y="4.500" width="10" height="11" fill="#fff" stroke={B} strokeWidth="1.200" />
        <path d="M7.500 7h6M7.500 10h6v3.500h-6zM10.500 10v3.500M7.500 11.700h6" stroke={B} />
      </Svg>
      <Svg className="ml-[7px]">
        <path d="M14 5V2H0.700v11.500H14V11M0.700 4.500h13M4 4.500v9" stroke={G} strokeWidth="1.200" />
        <path d="M6 8.500h8.500M13 6.500l2 2-2 2z" fill={B} stroke={B} strokeWidth="1.500" />
      </Svg>
      <Svg className="ml-[7px]">
        <path d="M0.700 1.500h12v9h-12z" fill="#fff" stroke={G} />
        <path d="M2.500 4h5" stroke={G} strokeWidth="1.300" />
        <rect x="3.700" y="5.500" width="11.800" height="9" fill="#fff" stroke={B} strokeWidth="1.200" />
        <path d="M6 8h4M6 11h3v1.500H6zM10 11h3v1.500h-3z" stroke={B} />
      </Svg>
      <At className="ml-[7px]"><Grid w={15} h={15} /></At>
      <Caret className="ml-[6px]" />
    </div>
  );
}

function TableWindow() {
  return (
    <section className="mt-[5px] flex h-[193px] shrink-0 flex-col border border-[#d3d4d8]">
      <div className="flex h-[31px] shrink-0 items-end border-b border-[#d3d4d8] pl-1">
        <Tab label="消息" close className="w-[54px] pl-[4px]" />
        <Tab label="进度" className="ml-2 w-[34px] justify-center" />
        <Tab label="日志" className="ml-2 w-[34px] justify-center" />
        <Tab label="表格 1" active close className="ml-2 w-[68px] pl-[4px]" />
        <PanelTools color="#45474a" className="mr-1 mb-[3px]" />
      </div>
      <TableToolbar />
      <div className="mx-[9px] flex h-[120px] flex-col border border-[#cfd0d2] bg-[#fdfdff]">
        <div className="flex h-[28px] shrink-0 border-r border-[#b1b2b4] bg-[#efeff0] whitespace-nowrap">
          <div className="w-[57px] border-r border-[#a8a9ab] pt-2 text-center leading-[18px] tracking-[0.250px]">Time (s)</div>
          <div className="w-[64px] border-r border-[#a8a9ab] pt-2 text-center leading-[18px]">
            机械能 <span className="tracking-[0.500px]">(J)</span>
          </div>
        </div>
        <div className="flex h-5 shrink-0 border-b border-[#a8a9ab] bg-[#fafafb]">
          <div className="w-[57px] border border-[#63acea] bg-[#d9eaf8] leading-[17px]">0.060000</div>
          <div className="w-[63px] border border-[#63acea] bg-[#d9eaf8] leading-[17px]">338.59</div>
          <div className="w-px bg-[#a8a9ab]" />
        </div>
      </div>
    </section>
  );
}

export default function App() {
  return (
    <div className="flex h-[1027px] w-[1740px] flex-col overflow-hidden bg-[#fafbff] [font-family:'Noto_Sans','Noto_Sans_CJK_SC',sans-serif] text-[12px] leading-[16px] text-black">
      <TitleBar />
      <Ribbon />
      <main className="mt-1 flex h-[845px] shrink-0 px-[7px]">
        <ModelBuilder />
        <Settings />
        <div className="ml-[5px] flex w-[859px] shrink-0 flex-col">
          <Graphics />
          <TableWindow />
        </div>
      </main>
      <footer className="mt-[12px] h-[18px] pl-[1057px] leading-[18px] tracking-[0.180px]">775 MB | 1698 MB</footer>
    </div>
  );
}
